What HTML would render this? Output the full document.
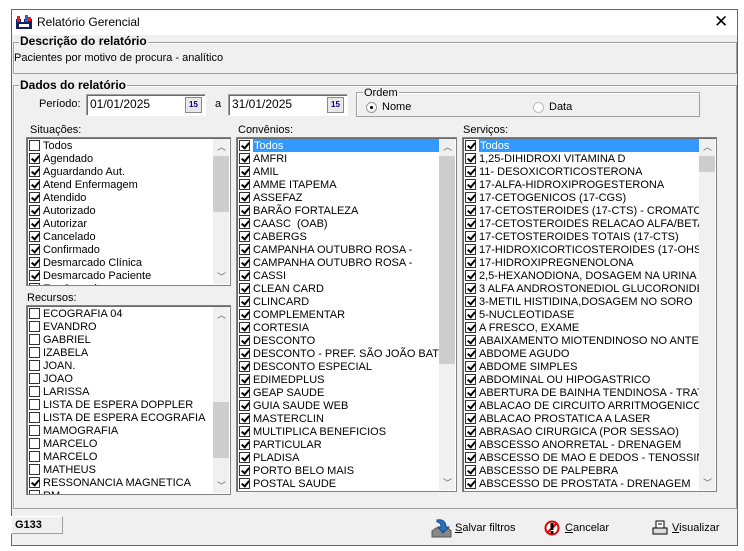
<!DOCTYPE html>
<html><head><meta charset="utf-8"><style>
*{box-sizing:border-box;margin:0;padding:0}
body{width:744px;height:551px;background:#fff;position:relative;overflow:hidden;font-family:"Liberation Sans",sans-serif;font-size:11px;color:#000}
.a{position:absolute}
#win{left:11px;top:9px;width:727px;height:537px;border:1px solid #1979ca;background:#f0f0f0}
#title{left:0;top:0;width:725px;height:25px;background:#fff}
.grp{position:absolute;border:1px solid #a0a0a0;box-shadow:inset 1px 1px 0 #fff}
.gl{position:absolute;background:#f0f0f0;padding:0 1px;font-weight:bold;font-size:12px;line-height:13px}
.box{position:absolute;background:#fff;border:1px solid #a0a0a0;border-right-color:#fff;border-bottom-color:#fff;box-shadow:inset 1px 1px 0 #696969}
.list{position:absolute;background:#fff;border:1px solid #828282;box-shadow:inset 1px 1px 0 #696969;overflow:hidden}
.row{height:13px;line-height:14px;white-space:nowrap;position:relative;padding-left:16px;overflow:hidden}
.row i{position:absolute;left:2px;top:1px;width:11px;height:11px;border:1px solid #333;background:#fff}
.row i.c::after{content:"";position:absolute;left:3px;top:0px;width:3px;height:6px;border:solid #000;border-width:0 2px 2px 0;transform:rotate(40deg)}
.row.s span{background:#3399ff;color:#fff;outline:1px dotted #c08000;outline-offset:-1px;display:inline-block;width:100%;padding-left:1px;height:13px}
.sb{position:absolute;top:1px;right:1px;width:16px;bottom:1px;background:#f0f0f0;z-index:2}
.sb .t{position:absolute;left:0;width:16px;background:#cdcdcd}
.sb .up,.sb .dn{position:absolute;left:4px;font-size:9px;color:#606060}
.lbl{position:absolute;line-height:13px}
</style></head><body>
<div id="win" class="a">
 <div id="title" class="a">
  <svg class="a" style="left:4px;top:5px" width="16" height="14"><rect x="0" y="4" width="16" height="10" fill="#102060"/><rect x="1" y="1" width="3" height="6" fill="#e02020"/><rect x="5" y="3" width="3" height="4" fill="#fff"/><rect x="9" y="0" width="3" height="7" fill="#3060e0"/><rect x="12" y="2" width="3" height="4" fill="#e02020"/><rect x="3" y="9" width="10" height="3" fill="#fff"/></svg>
  <div class="a" style="left:25px;top:5px;font-size:12px">Relatório Gerencial</div>
  <div class="a" style="left:702px;top:2px;font-size:17px;font-weight:300">✕</div>
 </div>
</div>
<div class="grp" style="left:13px;top:42px;width:724px;height:32px"></div>
<div class="gl" style="left:19px;top:35px">Descrição do relatório</div>
<div class="lbl" style="left:14px;top:52px">Pacientes por motivo de procura - analítico</div>

<div class="grp" style="left:13px;top:85px;width:724px;height:424px"></div>
<div class="gl" style="left:19px;top:79px">Dados do relatório</div>
<div class="lbl" style="left:39px;top:98px">Período:</div>
<div class="box" style="left:86px;top:94px;width:120px;height:22px"></div>
<div class="lbl" style="left:90px;top:98px;font-size:12px">01/01/2025</div>
<div class="a" style="left:185px;top:97px;width:17px;height:16px;border:1px solid #888;background:#e8e8e8;font-size:8px;text-align:center;line-height:14px;color:#000080;font-weight:bold">15</div>
<div class="lbl" style="left:215px;top:98px">a</div>
<div class="box" style="left:228px;top:94px;width:120px;height:22px"></div>
<div class="lbl" style="left:232px;top:98px;font-size:12px">31/01/2025</div>
<div class="a" style="left:327px;top:97px;width:17px;height:16px;border:1px solid #888;background:#e8e8e8;font-size:8px;text-align:center;line-height:14px;color:#000080;font-weight:bold">15</div>
<div class="grp" style="left:356px;top:92px;width:344px;height:25px"></div>
<div class="lbl" style="left:363px;top:87px;background:#f0f0f0;padding:0 1px">Ordem</div>
<div class="a" style="left:366px;top:102px;width:11px;height:11px;border-radius:50%;border:1px solid #999;background:#fff"><div class="a" style="left:3px;top:3px;width:3px;height:3px;border-radius:50%;background:#000"></div></div>
<div class="lbl" style="left:382px;top:101px">Nome</div>
<div class="a" style="left:533px;top:102px;width:11px;height:11px;border-radius:50%;border:1px solid #bbb;background:#fff"></div>
<div class="lbl" style="left:549px;top:101px">Data</div>

<div class="lbl" style="left:30px;top:124px">Situações:</div>
<div class="list" style="left:26px;top:137px;width:205px;height:149px">
 <div style="padding-top:1px;margin-right:17px">
 <div class="row"><i></i>Todos</div>
 <div class="row"><i class="c"></i>Agendado</div>
 <div class="row"><i class="c"></i>Aguardando Aut.</div>
 <div class="row"><i class="c"></i>Atend Enfermagem</div>
 <div class="row"><i class="c"></i>Atendido</div>
 <div class="row"><i class="c"></i>Autorizado</div>
 <div class="row"><i class="c"></i>Autorizar</div>
 <div class="row"><i class="c"></i>Cancelado</div>
 <div class="row"><i class="c"></i>Confirmado</div>
 <div class="row"><i class="c"></i>Desmarcado Clínica</div>
 <div class="row"><i class="c"></i>Desmarcado Paciente</div>
 <div class="row"><i class="c"></i>Em Consulta</div>
 </div>
 <div class="sb"><div class="up" style="top:1px">︿</div><div class="t" style="top:17px;height:56px"></div><div class="dn" style="bottom:1px">﹀</div></div>
</div>

<div class="lbl" style="left:27px;top:292px">Recursos:</div>
<div class="list" style="left:26px;top:305px;width:205px;height:190px">
 <div style="padding-top:1px;margin-right:17px">
 <div class="row"><i></i>ECOGRAFIA 04</div>
 <div class="row"><i></i>EVANDRO</div>
 <div class="row"><i></i>GABRIEL</div>
 <div class="row"><i></i>IZABELA</div>
 <div class="row"><i></i>JOAN.</div>
 <div class="row"><i></i>JOAO</div>
 <div class="row"><i></i>LARISSA</div>
 <div class="row"><i></i>LISTA DE ESPERA DOPPLER</div>
 <div class="row"><i></i>LISTA DE ESPERA ECOGRAFIA</div>
 <div class="row"><i></i>MAMOGRAFIA</div>
 <div class="row"><i></i>MARCELO</div>
 <div class="row"><i></i>MARCELO</div>
 <div class="row"><i></i>MATHEUS</div>
 <div class="row"><i class="c"></i>RESSONANCIA MAGNETICA</div>
 <div class="row"><i></i>RM</div>
 </div>
 <div class="sb"><div class="up" style="top:1px">︿</div><div class="t" style="top:95px;height:56px"></div><div class="dn" style="bottom:1px">﹀</div></div>
</div>

<div class="lbl" style="left:238px;top:124px">Convênios:</div>
<div class="list" style="left:236px;top:137px;width:221px;height:355px">
 <div style="padding-top:1px;margin-right:17px">
 <div class="row s"><i class="c"></i><span>Todos</span></div>
 <div class="row"><i class="c"></i>AMFRI</div>
 <div class="row"><i class="c"></i>AMIL</div>
 <div class="row"><i class="c"></i>AMME ITAPEMA</div>
 <div class="row"><i class="c"></i>ASSEFAZ</div>
 <div class="row"><i class="c"></i>BARÃO FORTALEZA</div>
 <div class="row"><i class="c"></i>CAASC&nbsp; (OAB)</div>
 <div class="row"><i class="c"></i>CABERGS</div>
 <div class="row"><i class="c"></i>CAMPANHA OUTUBRO ROSA -</div>
 <div class="row"><i class="c"></i>CAMPANHA OUTUBRO ROSA -</div>
 <div class="row"><i class="c"></i>CASSI</div>
 <div class="row"><i class="c"></i>CLEAN CARD</div>
 <div class="row"><i class="c"></i>CLINCARD</div>
 <div class="row"><i class="c"></i>COMPLEMENTAR</div>
 <div class="row"><i class="c"></i>CORTESIA</div>
 <div class="row"><i class="c"></i>DESCONTO</div>
 <div class="row"><i class="c"></i>DESCONTO - PREF. SÃO JOÃO BATI</div>
 <div class="row"><i class="c"></i>DESCONTO ESPECIAL</div>
 <div class="row"><i class="c"></i>EDIMEDPLUS</div>
 <div class="row"><i class="c"></i>GEAP SAUDE</div>
 <div class="row"><i class="c"></i>GUIA SAUDE WEB</div>
 <div class="row"><i class="c"></i>MASTERCLIN</div>
 <div class="row"><i class="c"></i>MULTIPLICA BENEFICIOS</div>
 <div class="row"><i class="c"></i>PARTICULAR</div>
 <div class="row"><i class="c"></i>PLADISA</div>
 <div class="row"><i class="c"></i>PORTO BELO MAIS</div>
 <div class="row"><i class="c"></i>POSTAL SAUDE</div>
 <div class="row"><i class="c"></i>PREFEITURA</div>
 </div>
 <div class="sb"><div class="up" style="top:1px">︿</div><div class="t" style="top:17px;height:208px"></div><div class="dn" style="bottom:1px">﹀</div></div>
</div>

<div class="lbl" style="left:463px;top:124px">Serviços:</div>
<div class="list" style="left:462px;top:137px;width:255px;height:355px">
 <div style="padding-top:1px;margin-right:17px">
 <div class="row s"><i class="c"></i><span>Todos</span></div>
 <div class="row"><i class="c"></i>1,25-DIHIDROXI VITAMINA D</div>
 <div class="row"><i class="c"></i>11- DESOXICORTICOSTERONA</div>
 <div class="row"><i class="c"></i>17-ALFA-HIDROXIPROGESTERONA</div>
 <div class="row"><i class="c"></i>17-CETOGENICOS (17-CGS)</div>
 <div class="row"><i class="c"></i>17-CETOSTEROIDES (17-CTS) - CROMATOGR</div>
 <div class="row"><i class="c"></i>17-CETOSTEROIDES RELACAO ALFA/BETA</div>
 <div class="row"><i class="c"></i>17-CETOSTEROIDES TOTAIS (17-CTS)</div>
 <div class="row"><i class="c"></i>17-HIDROXICORTICOSTEROIDES (17-OHS)</div>
 <div class="row"><i class="c"></i>17-HIDROXIPREGNENOLONA</div>
 <div class="row"><i class="c"></i>2,5-HEXANODIONA, DOSAGEM NA URINA</div>
 <div class="row"><i class="c"></i>3 ALFA ANDROSTONEDIOL GLUCORONIDEO</div>
 <div class="row"><i class="c"></i>3-METIL HISTIDINA,DOSAGEM NO SORO</div>
 <div class="row"><i class="c"></i>5-NUCLEOTIDASE</div>
 <div class="row"><i class="c"></i>A FRESCO, EXAME</div>
 <div class="row"><i class="c"></i>ABAIXAMENTO MIOTENDINOSO NO ANTEBR</div>
 <div class="row"><i class="c"></i>ABDOME AGUDO</div>
 <div class="row"><i class="c"></i>ABDOME SIMPLES</div>
 <div class="row"><i class="c"></i>ABDOMINAL OU HIPOGASTRICO</div>
 <div class="row"><i class="c"></i>ABERTURA DE BAINHA TENDINOSA - TRAT</div>
 <div class="row"><i class="c"></i>ABLACAO DE CIRCUITO ARRITMOGENICO</div>
 <div class="row"><i class="c"></i>ABLACAO PROSTATICA A LASER</div>
 <div class="row"><i class="c"></i>ABRASAO CIRURGICA (POR SESSAO)</div>
 <div class="row"><i class="c"></i>ABSCESSO ANORRETAL - DRENAGEM</div>
 <div class="row"><i class="c"></i>ABSCESSO DE MAO E DEDOS - TENOSSINO</div>
 <div class="row"><i class="c"></i>ABSCESSO DE PALPEBRA</div>
 <div class="row"><i class="c"></i>ABSCESSO DE PROSTATA - DRENAGEM</div>
 <div class="row"><i class="c"></i>ABSCESSO DE VULVA - DRENAGEM</div>
 </div>
 <div class="sb"><div class="up" style="top:1px">︿</div><div class="t" style="top:17px;height:16px"></div><div class="dn" style="bottom:1px">﹀</div></div>
</div>

<div class="a" style="left:11px;top:516px;width:52px;height:18px;border:1px solid #a0a0a0;border-top-color:#fff;border-left-color:#fff;font-weight:bold;line-height:16px;padding-left:3px">G133</div>
<svg class="a" style="left:430px;top:517px" width="22" height="22"><path d="M2 14 L6 11 H18 L21 14 V20 H2Z" fill="#888" stroke="#555"/><path d="M7 3 C13 2 16 5 16 10 L19 10 L13 16 L8 10 L11 10 C11 7 10 5 7 5Z" fill="#2a6fc0" stroke="#174a8a"/></svg>
<div class="lbl" style="left:455px;top:522px"><u>S</u>alvar filtros</div>
<svg class="a" style="left:544px;top:520px" width="16" height="16"><circle cx="8" cy="8" r="6.5" fill="#fff" stroke="#e00000" stroke-width="2"/><line x1="3" y1="13" x2="13" y2="3" stroke="#e00000" stroke-width="2"/><rect x="6.5" y="3" width="3" height="7" fill="#000"/><rect x="6.5" y="11" width="3" height="2.5" fill="#000"/></svg>
<div class="lbl" style="left:565px;top:522px"><u>C</u>ancelar</div>
<svg class="a" style="left:652px;top:520px" width="16" height="16"><rect x="4" y="1" width="8" height="7" fill="#fff" stroke="#000"/><rect x="1" y="8" width="14" height="6" fill="#ddd" stroke="#000"/><line x1="6" y1="4" x2="10" y2="4" stroke="#000"/></svg>
<div class="lbl" style="left:672px;top:522px"><u>V</u>isualizar</div>
</body></html>
